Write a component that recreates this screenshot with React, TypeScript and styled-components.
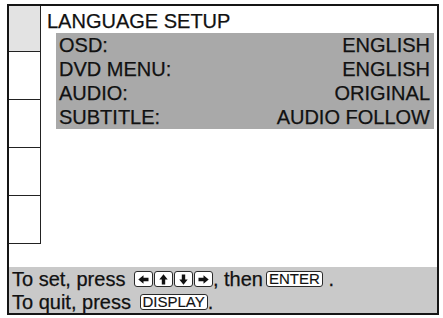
import React from "react";
import styled, { createGlobalStyle } from "styled-components";

const GlobalStyle = createGlobalStyle`
  html, body {
    margin: 0;
    padding: 0;
    background: #ffffff;
  }
  body {
    font-family: "Liberation Sans", Arial, sans-serif;
    color: #111111;
    -webkit-text-stroke: 0.25px #111111;
  }
`;

const Screen = styled.div`
  box-sizing: border-box;
  margin: 4px 0 0 7px;
  width: 432px;
  height: 311px;
  border: 2px solid #151515;
  display: flex;
  flex-direction: column;
  background: #ffffff;
`;

const Main = styled.div`
  flex: 1;
  display: flex;
  min-height: 0;
`;

const SideColumn = styled.div`
  width: 32px;
  display: flex;
  flex-direction: column;
`;

const SideCell = styled.div<{ $active?: boolean }>`
  box-sizing: border-box;
  height: ${(p) => (p.$active ? 46 : 48)}px;
  border-right: 1px solid #222222;
  border-bottom: 1px solid #222222;
  background: ${(p) => (p.$active ? "#e3e3e3" : "#ffffff")};
`;

const Content = styled.div`
  flex: 1;
  display: flex;
  flex-direction: column;
`;

const Title = styled.div`
  padding: 4px 0 0 6px;
  font-size: 20px;
  line-height: 23px;
`;

const OptionList = styled.div`
  margin: 0 3px 0 15px;
  background: #a9a9a9;
  display: flex;
  flex-direction: column;
`;

const OptionRow = styled.div`
  display: flex;
  justify-content: space-between;
  padding: 0 4px 0 3px;
  font-size: 20px;
  line-height: 24px;
`;

const Footer = styled.div`
  height: 46px;
  background: #c9c9c9;
  padding: 1px 0 0 3px;
  box-sizing: border-box;
  font-size: 20px;
  line-height: 23px;
  white-space: nowrap;
`;

const KeyGroup = styled.span`
  display: inline-flex;
  gap: 1px;
  margin: 3px 0 0 3px;
  vertical-align: top;
`;

const Key = styled.span<{ $arrow?: boolean }>`
  box-sizing: border-box;
  display: inline-flex;
  align-items: center;
  justify-content: center;
  height: 16px;
  min-width: ${(p) => (p.$arrow ? 19 : 0)}px;
  padding: ${(p) => (p.$arrow ? "0" : "0 2px")};
  margin: ${(p) => (p.$arrow ? "0" : "3px 0 0 3px")};
  border: 1px solid #2a2a2a;
  border-radius: 3px;
  background: #ffffff;
  font-size: 15px;
  line-height: 14px;
  -webkit-text-stroke: 0.15px #111111;
  vertical-align: top;
`;

const arrowRotation: Record<string, number> = {
  left: 0,
  up: 90,
  down: 270,
  right: 180,
};

const Arrow = ({ dir }: { dir: string }) => (
  <svg width="11" height="9" viewBox="0 0 11 9" style={{ transform: `rotate(${arrowRotation[dir]}deg)` }}>
    <path d="M0.3 4.5 L5.5 0.3 L5.5 2.8 L10.5 2.8 L10.5 6.2 L5.5 6.2 L5.5 8.7 Z" fill="#111" />
  </svg>
);

const options = [
  { label: "OSD:", value: "ENGLISH" },
  { label: "DVD MENU:", value: "ENGLISH" },
  { label: "AUDIO:", value: "ORIGINAL" },
  { label: "SUBTITLE:", value: "AUDIO FOLLOW" },
];

export default function App() {
  return (
    <>
      <GlobalStyle />
      <Screen>
        <Main>
          <SideColumn>
            <SideCell $active />
            <SideCell />
            <SideCell />
            <SideCell />
            <SideCell />
          </SideColumn>
          <Content>
            <Title>LANGUAGE SETUP</Title>
            <OptionList>
              {options.map((o) => (
                <OptionRow key={o.label}>
                  <span>{o.label}</span>
                  <span>{o.value}</span>
                </OptionRow>
              ))}
            </OptionList>
          </Content>
        </Main>
        <Footer>
          <div>
            To set, press{" "}
            <KeyGroup>
              {["left", "up", "down", "right"].map((d) => (
                <Key $arrow key={d}>
                  <Arrow dir={d} />
                </Key>
              ))}
            </KeyGroup>
            , then<Key>ENTER</Key> .
          </div>
          <div>
            To quit, press <Key>DISPLAY</Key>.
          </div>
        </Footer>
      </Screen>
    </>
  );
}
